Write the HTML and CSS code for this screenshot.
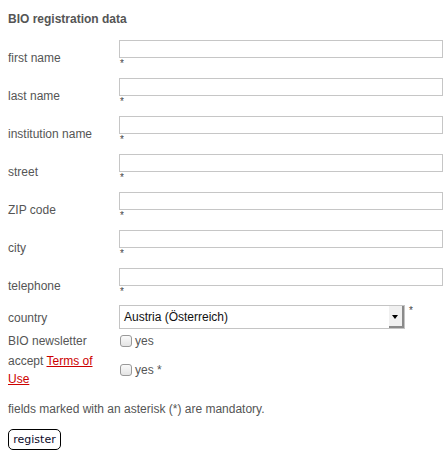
FILE: index.html
```html
<!DOCTYPE html>
<html lang="en">
<head>
    <meta charset="UTF-8">
    <meta name="viewport" content="width=device-width, initial-scale=1.0">
    <title>BIO registration</title>
    <link rel="stylesheet" href="styles.css">
</head>
<body>

    <div class="container">
        <h3 class="title">BIO registration data</h3>

        <form class="form">
            <div class="row">
                <label for="first">first name</label>
                <div class="field"><input type="text" id="first"><div class="req">*</div></div>
            </div>
            <div class="row">
                <label for="last">last name</label>
                <div class="field"><input type="text" id="last"><div class="req">*</div></div>
            </div>
            <div class="row">
                <label for="inst">institution name</label>
                <div class="field"><input type="text" id="inst"><div class="req">*</div></div>
            </div>
            <div class="row">
                <label for="street">street</label>
                <div class="field"><input type="text" id="street"><div class="req">*</div></div>
            </div>
            <div class="row">
                <label for="zip">ZIP code</label>
                <div class="field"><input type="text" id="zip"><div class="req">*</div></div>
            </div>
            <div class="row">
                <label for="city">city</label>
                <div class="field"><input type="text" id="city"><div class="req">*</div></div>
            </div>
            <div class="row">
                <label for="phone">telephone</label>
                <div class="field"><input type="text" id="phone"><div class="req">*</div></div>
            </div>

            <div class="row-country">
                <label for="country">country</label>
                <div class="field-country">
                    <div class="select">
                        <span class="select-text">Austria (Österreich)</span>
                        <span class="select-btn"></span>
                    </div>
                    <span class="req-side">*</span>
                </div>
            </div>

            <div class="row-check">
                <label>BIO newsletter</label>
                <div class="check"><span class="box"></span>yes</div>
            </div>

            <div class="row-terms">
                <label>accept <a href="#">Terms of Use</a></label>
                <div class="check"><span class="box"></span>yes *</div>
            </div>
        </form>

        <p class="note">fields marked with an asterisk (*) are mandatory.</p>

        <button class="btn">register</button>
    </div>

</body>
</html>
```

FILE: styles.css
```css
*{
    margin: 0;
    padding: 0;
    box-sizing: border-box;
}

body {
    background-color: #fff;
    font-family: "Liberation Sans", Arial, sans-serif;
    font-size: 12px;
    color: #555;
}

.container{
    padding: 12px 5px 0 8px;
}

.title{
    font-size: 12px;
    line-height: 14px;
    font-weight: bold;
    color: #555;
    margin-bottom: 13px;
}

.row, .row-country, .row-check, .row-terms{
    display: grid;
    grid-template-columns: 111px 1fr;
}

.row{
    height: 38px;
}
.row label{
    padding-top: 12px;
    line-height: 14px;
}
.field{
    padding-top: 1px;
}
.field input{
    display: block;
    width: 100%;
    height: 18px;
    border: 1px solid #c6c6c6;
    background: #fff;
    outline: none;
}
.req{
    font-size: 10px;
    line-height: 11px;
    margin-left: 1px;
    color: #444;
}

.row-country{
    height: 26px;
}
.row-country label{
    line-height: 14px;
    padding-top: 6px;
}
.field-country{
    display: flex;
    align-items: flex-start;
}
.select{
    position: relative;
    width: 286px;
    height: 24px;
    border: 1px solid #c4c4c4;
    background: #fff;
}
.select-text{
    display: block;
    padding: 4px 0 0 4px;
    line-height: 14px;
    color: #111;
    font-size: 12px;
}
.select-btn{
    position: absolute;
    top: 0;
    right: 0;
    width: 15px;
    height: 22px;
    background: #f0f0f0;
    border-right: 2px solid #8a8a8a;
    border-bottom: 2px solid #8a8a8a;
}
.select-btn::after{
    content: "";
    position: absolute;
    left: 3px;
    top: 9px;
    border-left: 3px solid transparent;
    border-right: 3px solid transparent;
    border-top: 4px solid #000;
}
.req-side{
    font-size: 10px;
    margin-left: 4px;
    line-height: 12px;
    color: #444;
}

.row-check{
    height: 20px;
    align-items: center;
}
.row-check label{
    line-height: 14px;
}

.row-terms{
    height: 38px;
    align-items: center;
}
.row-terms label{
    line-height: 18px;
    padding-right: 14px;
}
.row-terms a{
    color: #cc0000;
}

.check{
    display: flex;
    align-items: center;
    line-height: 14px;
}
.box{
    display: inline-block;
    width: 12px;
    height: 12px;
    border: 1px solid #999;
    border-radius: 3px;
    background: linear-gradient(#fafafa, #e4e4e4);
    margin: 0 3px 0 1px;
}

.note{
    margin-top: 13px;
    line-height: 14px;
}

.btn{
    margin-top: 13px;
    padding: 0 4px;
    height: 21px;
    width: 53px;
    font-family: "DejaVu Sans", sans-serif;
    font-size: 11px;
    color: #0a0a2a;
    background: #fff;
    border: 1px solid #000;
    border-radius: 5px;
}
```
